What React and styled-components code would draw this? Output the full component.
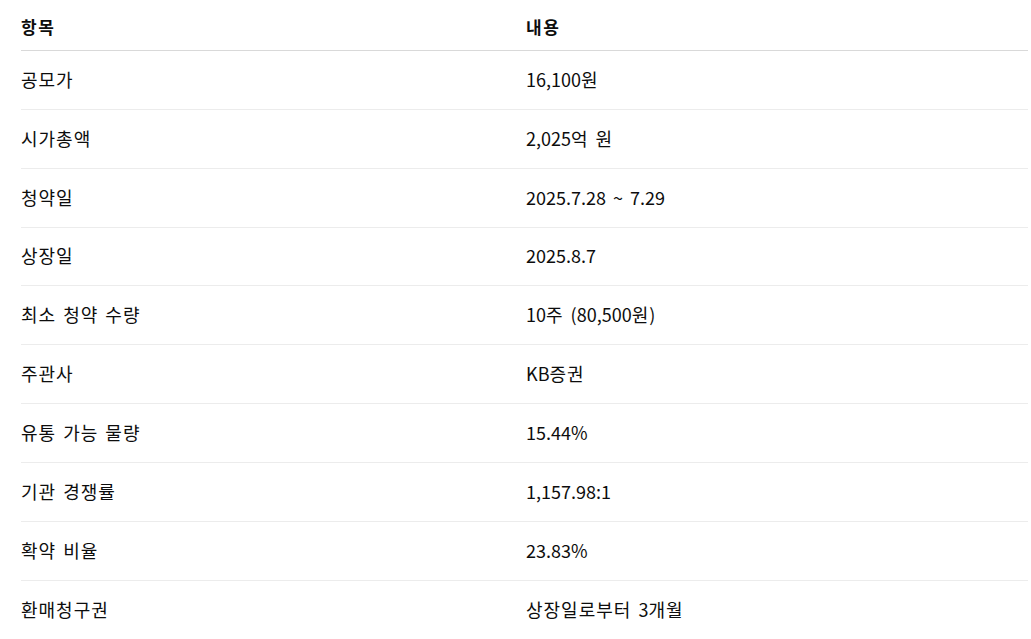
import React from "react";
import styled, { createGlobalStyle } from "styled-components";

const GlobalStyle = createGlobalStyle`
  html, body {
    margin: 0;
    padding: 0;
    background: #ffffff;
  }
  body {
    font-family: "Noto Sans CJK KR", "Noto Sans", sans-serif;
    color: #0d0d0d;
  }
`;

const StyledPage = styled.div`
  padding: 0 3px 0 21px;
`;

const StyledTable = styled.div`
  display: grid;
  grid-template-columns: 505px 1fr;
  width: 1007px;
`;

const StyledHeadCell = styled.div`
  height: 51px;
  box-sizing: border-box;
  padding-top: 2px;
  display: flex;
  align-items: center;
  font-size: 17px;
  font-weight: 700;
  border-bottom: 1px solid #d9d9d9;
`;

const StyledCell = styled.div`
  height: 58.85px;
  box-sizing: border-box;
  padding-bottom: 2px;
  display: flex;
  align-items: center;
  font-size: 18px;
  font-weight: 400;
  border-bottom: ${(p) => (p.$last ? "none" : "1px solid #ececec")};
`;

const StyledLine = styled.span`
  white-space: pre;
  word-spacing: 3px;
`;

const StyledHangul = styled.span`
  letter-spacing: ${(p) => p.$spacing || "1px"};
`;

const Text = ({ children, spacing }) => (
  <StyledLine>
    {children.split(/([\uAC00-\uD7A3]+)/).map((part, i) =>
      /[\uAC00-\uD7A3]/.test(part) ? (
        <StyledHangul key={i} $spacing={spacing}>
          {part}
        </StyledHangul>
      ) : (
        part
      )
    )}
  </StyledLine>
);

const rows = [
  ["공모가", "16,100원"],
  ["시가총액", "2,025억 원"],
  ["청약일", "2025.7.28 ~ 7.29"],
  ["상장일", "2025.8.7"],
  ["최소 청약 수량", "10주 (80,500원)"],
  ["주관사", "KB증권"],
  ["유통 가능 물량", "15.44%"],
  ["기관 경쟁률", "1,157.98:1"],
  ["확약 비율", "23.83%"],
  ["환매청구권", "상장일로부터 3개월"],
];

export default function App() {
  return (
    <StyledPage>
      <GlobalStyle />
      <StyledTable>
        <StyledHeadCell>
          <Text spacing="1.5px">항목</Text>
        </StyledHeadCell>
        <StyledHeadCell>
          <Text spacing="1.5px">내용</Text>
        </StyledHeadCell>
        {rows.map(([label, value], i) => (
          <React.Fragment key={label}>
            <StyledCell $last={i === rows.length - 1}>
              <Text>{label}</Text>
            </StyledCell>
            <StyledCell $last={i === rows.length - 1}>
              <Text>{value}</Text>
            </StyledCell>
          </React.Fragment>
        ))}
      </StyledTable>
    </StyledPage>
  );
}
